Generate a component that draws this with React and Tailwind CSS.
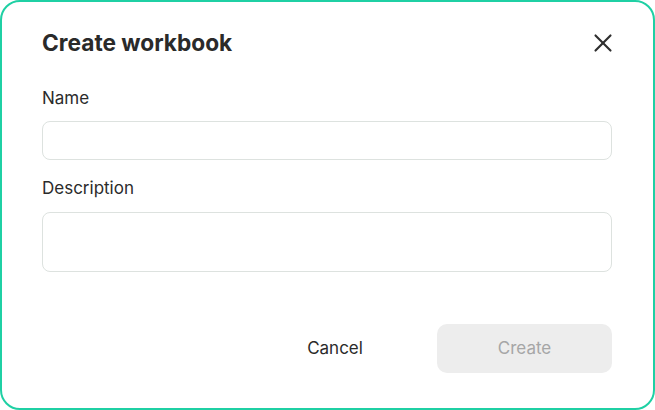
import { X } from "lucide-react";

const Field = ({ label, tall }) => (
  <div className="flex flex-col">
    <label className="text-[17px] leading-[20px] text-[#2b2b2b]">{label}</label>
    {tall ? (
      <textarea className="mt-[14px] h-[60px] w-full resize-none rounded-[8px] border border-[#dde2df] bg-white" />
    ) : (
      <input className="mt-[13px] h-[39px] w-full rounded-[8px] border border-[#dde2df] bg-white" />
    )}
  </div>
);

export default function App() {
  return (
    <div className="w-[655px] h-[410px] bg-white font-['Inter',sans-serif]">
      <div className="flex h-full flex-col rounded-[20px] border-2 border-[#1fd0a4] pl-[40px] pr-[41px] pt-[26px]">
        <div className="flex items-center justify-between">
          <h1 className="text-[22.7px] leading-[30px] font-bold text-[#2a2a2a]">Create workbook</h1>
          <button className="-mr-[6px] text-[#2f2f2f]">
            <X className="h-[30px] w-[30px]" strokeWidth={1.7} />
          </button>
        </div>

        <div className="mt-[30px] flex flex-col gap-[18px]">
          <Field label="Name" />
          <Field label="Description" tall />
        </div>

        <div className="mt-[52px] flex items-center justify-end gap-[12px]">
          <button className="h-[49px] w-[180px] text-[17px] text-[#2a2a2a]">Cancel</button>
          <button
            disabled
            className="h-[49px] w-[175px] rounded-[10px] bg-[#ededed] text-[17px] text-[#a6a6a6]"
          >
            Create
          </button>
        </div>
      </div>
    </div>
  );
}
